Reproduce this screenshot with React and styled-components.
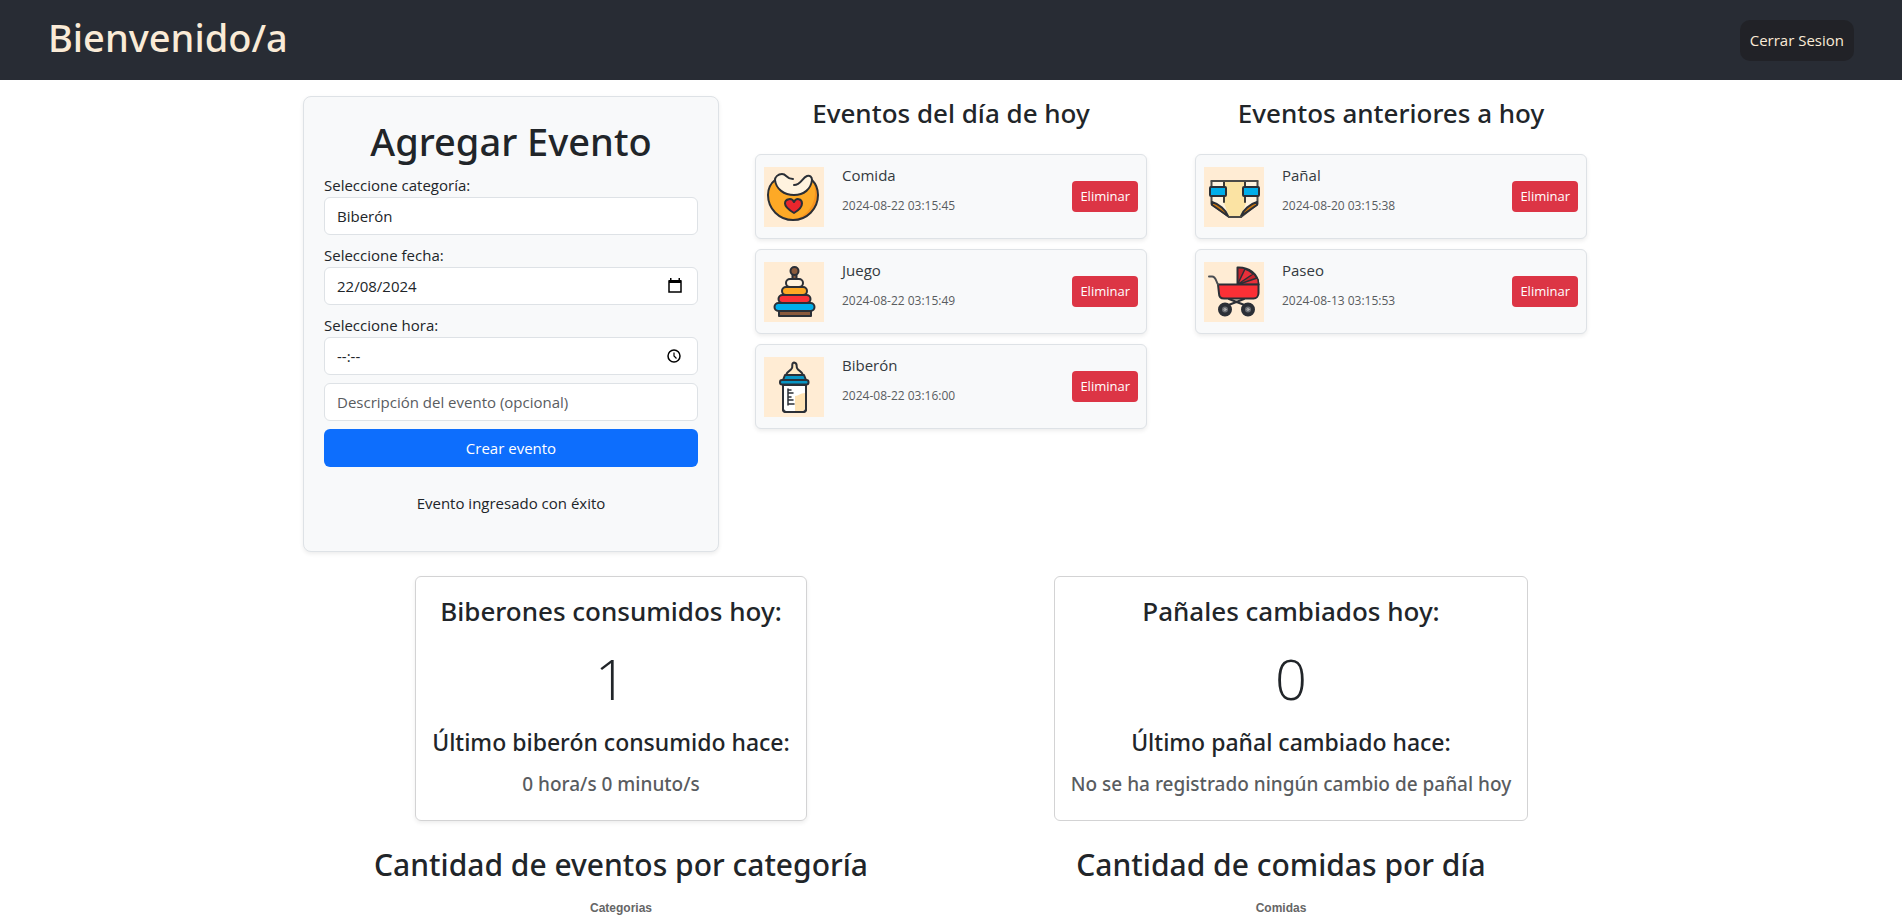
import React, { useState } from "react";
import styled, { createGlobalStyle } from "styled-components";

const GlobalStyle = createGlobalStyle`
  *, *::before, *::after { box-sizing: border-box; }
  body {
    margin: 0;
    background: #fff;
    color: #212529;
    font-family: "Segoe UI", "Open Sans", "Noto Sans", sans-serif;
    font-size: 15px;
    line-height: 24px;
  }
  h1, h2, h3, h4, h5, p { margin: 0; }
  h1, h2, h3, h4, h5 {
    font-family: "Segoe UI", "Noto Sans", "Open Sans", sans-serif;
    font-weight: 500;
  }
  button, input, select { font: inherit; color: inherit; }
`;

/* ---------- header ---------- */

const Header = styled.header`
  display: flex;
  align-items: center;
  justify-content: space-between;
  min-height: 80px;
  padding: 0 48px;
  background: #282c34;
`;

const Brand = styled.h1`
  padding-bottom: 6px;
  color: antiquewhite;
  font-size: 38px;
  line-height: 48px;
`;

const LogoutButton = styled.button`
  padding: 8px 10px;
  border: 0;
  border-radius: 10px;
  background: #212227;
  color: antiquewhite;
  line-height: 25px;
  cursor: pointer;
`;

/* ---------- page ---------- */

const Page = styled.main`
  width: 100%;
  max-width: 1320px;
  margin: 0 auto;
  padding-top: 16px;
`;

const Columns = styled.div`
  display: grid;
  grid-template-columns: repeat(3, minmax(0, 1fr));
  align-items: start;
  @media (max-width: 991px) {
    grid-template-columns: minmax(0, 1fr);
    row-gap: 24px;
  }
`;

const Column = styled.section`
  padding: 0 ${(p) => (p.$wide ? 12 : 24)}px;
`;

const FormCard = styled.form`
  display: flex;
  flex-direction: column;
  gap: 8px;
  padding: 20px 20px 36px;
  border: 1px solid #dee2e6;
  border-radius: 8px;
  background: #f8f9fa;
  box-shadow: 0 2px 4px rgba(0, 0, 0, 0.075);
`;

const FormTitle = styled.h1`
  font-size: 38px;
  line-height: 48px;
  text-align: center;
`;

const Field = styled.div`
  display: flex;
  flex-direction: column;
`;

const controlBox = `
  width: 100%;
  height: 38px;
  padding: 6px 12px;
  border: 1px solid #dee2e6;
  border-radius: 6px;
  background: #fff;
`;

const Select = styled.select`
  ${controlBox}
  appearance: none;
`;

const TextInput = styled.input`
  ${controlBox}
  &::placeholder { color: ${(p) => (p.$strongHint ? "#212529" : "#595c5f")}; opacity: 1; }
`;

const PickerBox = styled.div`
  display: grid;
  align-items: center;
  > * { grid-area: 1 / 1; }
`;

const PickerButton = styled.button`
  display: flex;
  justify-self: end;
  margin-right: 16px;
  padding: 0;
  border: 0;
  background: none;
  color: #000;
`;

const SubmitButton = styled.button`
  height: 38px;
  border: 0;
  border-radius: 6px;
  background: #0d6efd;
  color: #fff;
  cursor: pointer;
`;

const FormMessage = styled.p`
  padding-top: 16px;
  text-align: center;
`;

const ListTitle = styled.h2`
  margin-bottom: 24px;
  font-size: 26px;
  line-height: 34px;
  text-align: center;
`;

const EventList = styled.ul`
  display: flex;
  flex-direction: column;
  gap: 10px;
  margin: 0;
  padding: 0;
  list-style: none;
`;

const EventCard = styled.li`
  display: flex;
  align-items: center;
  gap: 18px;
  min-height: 85px;
  padding: 8px;
  border: 1px solid #dee2e6;
  border-radius: 6px;
  background: #f8f9fa;
  box-shadow: 0 2px 4px rgba(0, 0, 0, 0.075);
`;

const EventIcon = styled.svg`
  flex: none;
  width: 60px;
  height: 60px;
  background: #ffecd4;
  stroke: #2b2f36;
  stroke-width: 2;
  stroke-linejoin: round;
  stroke-linecap: round;
  fill: none;
`;

const EventText = styled.div`
  flex: 1;
  align-self: flex-start;
`;

const EventName = styled.p`
  color: #343a40;
`;

const EventTime = styled.time`
  display: block;
  margin-top: 8px;
  color: #595c5f;
  font-size: 12px;
  line-height: 22px;
`;

const DeleteButton = styled.button`
  padding: 5px 8px;
  border: 0;
  border-radius: 4px;
  background: #dc3545;
  color: #fff;
  font-size: 13px;
  line-height: 21px;
  cursor: pointer;
`;

/* ---------- statistics ---------- */

const Stats = styled.section`
  display: grid;
  grid-template-columns: repeat(2, minmax(0, 1fr));
  gap: 40px;
  justify-items: center;
  padding: 24px 0;
`;

const StatCard = styled.article`
  display: flex;
  flex-direction: column;
  align-items: center;
  gap: 16px;
  padding: 17px 16px 24px;
  border: 1px solid #d3d3d4;
  border-radius: 6px;
  text-align: center;
  box-shadow: ${(p) => (p.$raised ? "0 2px 4px rgba(0, 0, 0, 0.075)" : "none")};
`;

const StatTitle = styled.h3`
  font-size: 26px;
  line-height: 34px;
`;

const StatNumber = styled.p`
  font-size: 56px;
  font-weight: 300;
  line-height: 68px;
`;

const StatSubtitle = styled.h4`
  font-size: 23px;
  line-height: 28px;
`;

const StatDetail = styled.h5`
  color: #595c5f;
  font-size: 19px;
  line-height: 24px;
`;

const Charts = styled.section`
  display: grid;
  grid-template-columns: repeat(2, minmax(0, 1fr));
  text-align: center;
`;

const ChartTitle = styled.h2`
  font-size: 30px;
  line-height: 40px;
`;

const ChartCaption = styled.p`
  padding-top: 14px;
  color: #666;
  font-family: "Liberation Sans", Arial, sans-serif;
  font-size: 12px;
  font-weight: 700;
  line-height: 18px;
`;

/* ---------- drawings ---------- */

const drawings = {
  Comida: (
    <>
      <path d="M11 13C6 17 4 22 4 28a25 25 0 0 0 50 0c0-6-2-11-6-15z" fill="#fda926" stroke="none" />
      <path d="M50 17c4 16-4 30-18 35 13 1 22-10 22-24 0-4-1-8-4-11z" fill="#f7931e" stroke="none" />
      <path d="M11 12c1 10 9 16 19 16s17-6 18-16l-4-4H16z" fill="#fff3df" stroke="none" />
      <path d="M18 6c5 0 4 6 11 6v6c8 0 9-8 15-10V5H18z" fill="#ffecd4" stroke="none" />
      <path d="M11 13C6 17 4 22 4 28a25 25 0 0 0 50 0c0-6-2-11-6-15" />
      <path d="M29 12c-7 0-6-5-11-5-4 0-7 3-7 6 1 9 9 15 19 15s17-6 18-15c0-3-2-5-5-4-5 2-6 9-13 9" />
      <path d="M30 46c-5-3-9-6-9-9.500c0-5 7-6 9-1.500c2-4.500 8-3.500 8 1.500c0 3.500-3 6.500-8 9.500z" fill="#e8262d" />
    </>
  ),
  Juego: (
    <>
      <path d="M28.500 12h4v6h-4z" fill="#8a5a3c" />
      <circle cx="30.500" cy="9" r="4" fill="#8a5a3c" />
      <path d="M15 49h32v5H15z" fill="#8a5a3c" />
      <rect x="22" y="17" width="17" height="8" rx="4" fill="#fff3df" />
      <rect x="18" y="25" width="25" height="8" rx="4" fill="#fda926" />
      <rect x="14.500" y="33" width="32" height="8" rx="4" fill="#fb3036" />
      <rect x="10.500" y="41" width="40" height="8" rx="4" fill="#00aeea" />
    </>
  ),
  "Biberón": (
    <>
      <path d="M22 18c1-4 5-4 6-7 1-2-1-5 2-5.500c4 .5 2 3.500 3 5.500 1 3 5 3 6 7z" fill="#ffe9c4" />
      <path d="M19 28h23v24c0 2-1 3-3 3H22c-2 0-3-1-3-3z" fill="#fff" />
      <path d="M31 39c4 0 5-3 10-3v15c0 2-1 3-3 3h-7z" fill="#ffe3b5" stroke="none" />
      <path d="M19 28h23v24c0 2-1 3-3 3H22c-2 0-3-1-3-3z" />
      <path d="M24 32v16M24 33h3M24 36h5M24 40h3M24 43h5M24 47h6" strokeWidth="1.500" />
      <path d="M21 18h19l2 5H19z" fill="#0795c4" />
      <rect x="16" y="23" width="28.500" height="4.500" rx="2" fill="#0795c4" />
    </>
  ),
  "Pañal": (
    <>
      <path d="M7.500 14h46v23L37 50H25L7.500 37z" fill="#fff3df" stroke="#4a4a48" />
      <path d="M20 14h22v22l-5 14H25l-5-14z" fill="#fbe3a3" stroke="none" />
      <path d="M8 35c7 2 14 8 16 14L8 38zM53 35c-7 2-14 8-16 14l16-11z" fill="#c87612" />
      <path d="M20 14v21M41 14v21" stroke="#3b3a36" />
      <path d="M7.500 14h46M25 50h12" stroke="#4a4a48" />
      <rect x="6" y="20" width="16" height="9" rx="1" fill="#00aeea" />
      <rect x="39" y="20" width="16" height="9" rx="1" fill="#00aeea" />
    </>
  ),
  Paseo: (
    <>
      <path d="M22 44l18-7M43 44L25 37" />
      <path d="M33.500 22.500v-17C45 5 54 12 54.500 22.500z" fill="#c5212b" />
      <path d="M33.500 22.500L41 7c4 1 6 3 8 5zM34 22.500L53 16c2 2 1 4 1.500 6.500z" fill="#e8303a" strokeWidth="1.500" />
      <path d="M14 22.500h40.500V31c0 3-2 5.500-5 5.500H20c-3 0-5-2-5-5z" fill="#fb3036" />
      <path d="M5 14.500h3c4 0 4 5 6 8" stroke="#4a4d52" />
      <circle cx="21" cy="47.500" r="5" fill="#6b6e73" strokeWidth="4" />
      <circle cx="44" cy="47.500" r="5" fill="#6b6e73" strokeWidth="4" />
      <circle cx="21" cy="47.500" r="1" stroke="#bbb" strokeWidth="1" />
      <circle cx="44" cy="47.500" r="1" stroke="#bbb" strokeWidth="1" />
    </>
  ),
};

const CalendarIcon = () => (
  <svg width="14" height="16" viewBox="0 0 14 16" aria-hidden="true">
    <path d="M1 3h12v11H1z" fill="none" stroke="#000" strokeWidth="1.500" />
    <path d="M1 2h12v3H1zM2 0h1.500v3H2zM10.500 0H12v3h-1.500z" fill="#000" />
  </svg>
);

const ClockIcon = () => (
  <svg width="16" height="16" viewBox="0 0 16 16" fill="none" stroke="#000" aria-hidden="true">
    <circle cx="8" cy="8" r="6" strokeWidth="1.500" />
    <path d="M8 4.500V8l2.500 2.500" strokeWidth="1.200" />
  </svg>
);

/* ---------- data ---------- */

const todayEvents = [
  { name: "Comida", time: "2024-08-22 03:15:45" },
  { name: "Juego", time: "2024-08-22 03:15:49" },
  { name: "Biberón", time: "2024-08-22 03:16:00" },
];

const pastEvents = [
  { name: "Pañal", time: "2024-08-20 03:15:38" },
  { name: "Paseo", time: "2024-08-13 03:15:53" },
];

function EventColumn({ title, initial }) {
  const [events, setEvents] = useState(initial);
  return (
    <Column>
      <ListTitle>{title}</ListTitle>
      <EventList>
        {events.map((event) => (
          <EventCard key={event.time}>
            <EventIcon viewBox="0 0 60 60" role="img" aria-label={event.name}>
              {drawings[event.name]}
            </EventIcon>
            <EventText>
              <EventName>{event.name}</EventName>
              <EventTime>{event.time}</EventTime>
            </EventText>
            <DeleteButton type="button" onClick={() => setEvents(events.filter((e) => e !== event))}>
              Eliminar
            </DeleteButton>
          </EventCard>
        ))}
      </EventList>
    </Column>
  );
}

function EventForm() {
  return (
    <FormCard onSubmit={(e) => e.preventDefault()}>
      <FormTitle>Agregar Evento</FormTitle>
      <Field>
        <label htmlFor="categoria">Seleccione categoría:</label>
        <Select id="categoria" defaultValue="Biberón">
          {Object.keys(drawings).map((name) => (
            <option key={name}>{name}</option>
          ))}
        </Select>
      </Field>
      <Field>
        <label htmlFor="fecha">Seleccione fecha:</label>
        <PickerBox>
          <TextInput id="fecha" defaultValue="22/08/2024" />
          <PickerButton type="button" aria-label="Abrir calendario">
            <CalendarIcon />
          </PickerButton>
        </PickerBox>
      </Field>
      <Field>
        <label htmlFor="hora">Seleccione hora:</label>
        <PickerBox>
          <TextInput id="hora" placeholder="--:--" $strongHint />
          <PickerButton type="button" aria-label="Elegir hora">
            <ClockIcon />
          </PickerButton>
        </PickerBox>
      </Field>
      <TextInput aria-label="Descripción del evento" placeholder="Descripción del evento (opcional)" />
      <SubmitButton type="submit">Crear evento</SubmitButton>
      <FormMessage role="status">Evento ingresado con éxito</FormMessage>
    </FormCard>
  );
}

function Stat({ title, count, subtitle, detail, raised }) {
  return (
    <StatCard $raised={raised}>
      <StatTitle>{title}</StatTitle>
      <StatNumber>{count}</StatNumber>
      <StatSubtitle>{subtitle}</StatSubtitle>
      <StatDetail>{detail}</StatDetail>
    </StatCard>
  );
}

export default function App() {
  return (
    <>
      <GlobalStyle />
      <Header>
        <Brand>Bienvenido/a</Brand>
        <LogoutButton type="button">Cerrar Sesion</LogoutButton>
      </Header>
      <Page>
        <Columns>
          <Column $wide>
            <EventForm />
          </Column>
          <EventColumn title="Eventos del día de hoy" initial={todayEvents} />
          <EventColumn title="Eventos anteriores a hoy" initial={pastEvents} />
        </Columns>
        <Stats>
          <Stat
            raised
            title="Biberones consumidos hoy:"
            count={1}
            subtitle="Último biberón consumido hace:"
            detail="0 hora/s 0 minuto/s"
          />
          <Stat
            title="Pañales cambiados hoy:"
            count={0}
            subtitle="Último pañal cambiado hace:"
            detail="No se ha registrado ningún cambio de pañal hoy"
          />
        </Stats>
        <Charts>
          <div>
            <ChartTitle>Cantidad de eventos por categoría</ChartTitle>
            <ChartCaption>Categorias</ChartCaption>
          </div>
          <div>
            <ChartTitle>Cantidad de comidas por día</ChartTitle>
            <ChartCaption>Comidas</ChartCaption>
          </div>
        </Charts>
      </Page>
    </>
  );
}
